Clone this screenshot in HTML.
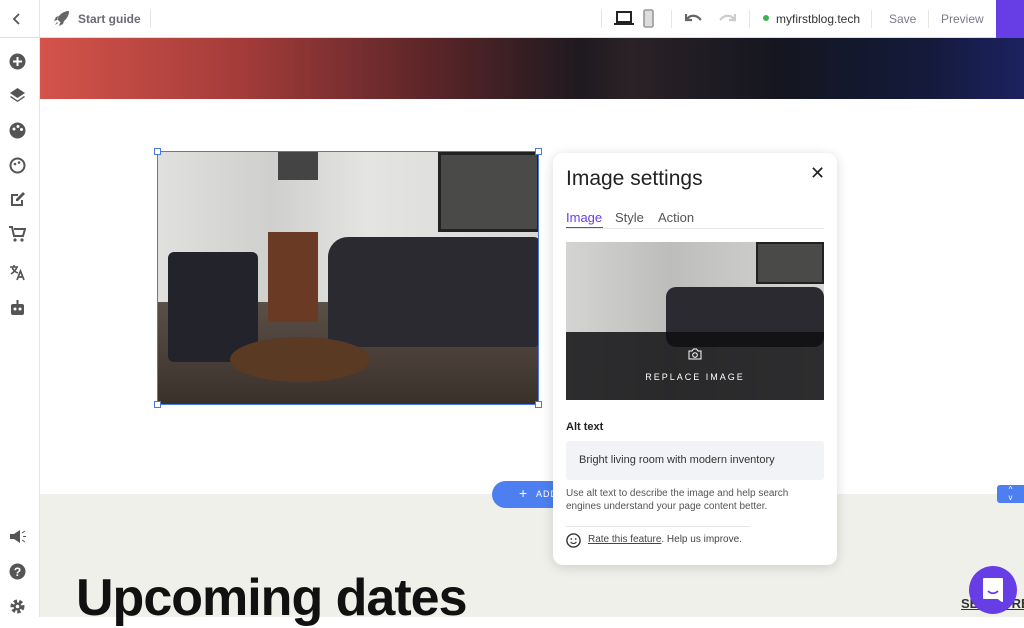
<!DOCTYPE html>
<html><head><meta charset="utf-8"><style>
*{box-sizing:border-box;margin:0;padding:0}
body{width:1024px;height:617px;overflow:hidden;font-family:"Liberation Sans",sans-serif;background:#fff;position:relative}
.top{position:absolute;left:0;top:0;width:1024px;height:38px;background:#fff;border-bottom:1px solid #ddd;z-index:5}
.side{position:absolute;left:0;top:38px;width:40px;height:579px;background:#fff;border-right:1px solid #e4e4e4;z-index:5}
.ic{position:absolute;left:9px;width:17px;height:17px;color:#4a4a55}
.t{position:absolute;font-size:12px;color:#7a7a88;top:12px;white-space:nowrap}
.sep{position:absolute;top:10px;width:1px;height:18px;background:#e6e6e6}
.hero{position:absolute;left:40px;top:38px;width:984px;height:61px;background:linear-gradient(90deg,#d4534a 0%,#a53c3a 20%,#5a2528 40%,#1e1a20 55%,#2a2226 60%,#151620 75%,#141a3a 90%,#1c2260 100%)}
.grey{position:absolute;left:40px;top:494px;width:984px;height:123px;background:#f0f0eb}
.photo{position:absolute;left:157px;top:151px;width:382px;height:254px;border:1px solid #4a7ae0;overflow:hidden;background:linear-gradient(90deg,#e0e0de 0%,#cfcfcd 30%,#e4e4e2 55%,#d8d8d6 100%)}
.h{position:absolute;width:7px;height:7px;background:#fff;border:1px solid #4a7ae0}
.panel{position:absolute;left:553px;top:153px;width:284px;height:412px;background:#fff;border-radius:10px;box-shadow:0 2px 12px rgba(0,0,0,.15);z-index:6}
</style></head><body>
<div class="top">
 <svg style="position:absolute;left:11px;top:12px" width="12" height="14" viewBox="0 0 12 14"><path d="M8 2L3 7l5 5" stroke="#555" stroke-width="1.8" fill="none"/></svg>
 <div style="position:absolute;left:39px;top:0;width:1px;height:38px;background:#e4e4e4"></div>
 <svg style="position:absolute;left:53px;top:10px" width="17" height="17" viewBox="0 0 17 17"><path d="M16 1C10 1 6 5 4 9l4 4c4-2 8-6 8-12zM4 10l-3 1 2-4 3-1zM7 13l-1 3 4-2 1-3zM2 15l2-3 1 1z" fill="#666"/></svg>
 <div class="t" style="left:78px;font-weight:bold;color:#6b6b78">Start guide</div>
 <div class="sep" style="left:150px"></div>
 <div class="sep" style="left:601px"></div>
 <svg style="position:absolute;left:614px;top:11px" width="20" height="15" viewBox="0 0 20 15"><rect x="3" y="1" width="14" height="10" stroke="#222" stroke-width="2" fill="none"/><rect x="0" y="12" width="20" height="2" fill="#222"/></svg>
 <svg style="position:absolute;left:643px;top:9px" width="11" height="19" viewBox="0 0 11 19"><rect x="1" y="1" width="9" height="17" rx="1.5" stroke="#999" stroke-width="1.6" fill="#ddd"/></svg>
 <div class="sep" style="left:671px"></div>
 <svg style="position:absolute;left:685px;top:12px" width="18" height="12" viewBox="0 0 18 12"><path d="M1 2v6h6M2 7c3-4 9-5 14 1" stroke="#666" stroke-width="2.2" fill="none"/></svg>
 <svg style="position:absolute;left:718px;top:12px" width="18" height="12" viewBox="0 0 18 12"><path d="M17 2v6h-6M16 7c-3-4-9-5-14 1" stroke="#ccc" stroke-width="2.2" fill="none"/></svg>
 <div class="sep" style="left:749px"></div>
 <div style="position:absolute;left:763px;top:15px;width:6px;height:6px;border-radius:50%;background:#3fb34f"></div>
 <div class="t" style="left:776px;color:#333">myfirstblog.tech</div>
 <div class="sep" style="left:871px"></div>
 <div class="t" style="left:889px">Save</div>
 <div class="sep" style="left:928px"></div>
 <div class="t" style="left:941px">Preview</div>
 <div style="position:absolute;left:996px;top:0;width:28px;height:38px;background:#673de6"></div>
</div>
<div class="side">
 <svg class="ic" style="top:15px" viewBox="0 0 17 17"><circle cx="8.5" cy="8.5" r="8" fill="#555"/><path d="M8.5 4v9M4 8.5h9" stroke="#fff" stroke-width="2"/></svg>
 <svg class="ic" style="top:49px" viewBox="0 0 17 17"><path d="M8.5 1L1 6l7.5 5L16 6zM2 9l6.5 4.5L15 9l1 1-7.5 5L1 10z" fill="#555"/></svg>
 <svg class="ic" style="top:84px" viewBox="0 0 17 17"><circle cx="8.5" cy="8.5" r="8" fill="#555"/><circle cx="5" cy="7" r="1.5" fill="#fff"/><circle cx="9" cy="4.5" r="1.5" fill="#fff"/><circle cx="12.5" cy="7.5" r="1.5" fill="#fff"/></svg>
 <svg class="ic" style="top:119px" viewBox="0 0 17 17"><circle cx="8.5" cy="8.5" r="7" stroke="#555" stroke-width="2" fill="none"/><circle cx="6" cy="7" r="1.3" fill="#555"/><circle cx="10" cy="5.5" r="1.3" fill="#555"/></svg>
 <svg class="ic" style="top:153px" viewBox="0 0 17 17"><path d="M2 3h7v2H4v8h8V9h2v6H2z" fill="#555"/><path d="M14 1l2 2-7 7H7V8z" fill="#555"/></svg>
 <svg class="ic" style="top:188px" viewBox="0 0 17 17"><path d="M0 1h3l2 9h9l2-7H5" stroke="#555" stroke-width="2" fill="none"/><circle cx="6" cy="14" r="1.6" fill="#555"/><circle cx="13" cy="14" r="1.6" fill="#555"/></svg>
 <svg class="ic" style="top:226px" viewBox="0 0 17 17"><path d="M1 3h8M5 1v2M3 3c1 3 3 5 6 6M8 3c-1 3-3 5-6 7" stroke="#555" stroke-width="1.6" fill="none"/><path d="M8 16l3.5-9 3.5 9M9.3 13h4.4" stroke="#555" stroke-width="1.7" fill="none"/></svg>
 <svg class="ic" style="top:261px" viewBox="0 0 17 17"><rect x="2" y="5" width="13" height="11" rx="2" fill="#555"/><rect x="7.5" y="1" width="2" height="4" fill="#555"/><circle cx="6" cy="10" r="1.5" fill="#fff"/><circle cx="11" cy="10" r="1.5" fill="#fff"/></svg>
 <svg class="ic" style="top:490px" viewBox="0 0 17 17"><path d="M1 6h4l6-4v13l-6-4H1z" fill="#555"/><path d="M13 5l3-2M13 12l3 2M14 8.5h3" stroke="#555"/></svg>
 <svg class="ic" style="top:525px" viewBox="0 0 17 17"><circle cx="8.5" cy="8.5" r="8" fill="#555"/><text x="8.5" y="13" font-size="12" font-weight="bold" fill="#fff" text-anchor="middle" font-family="Liberation Sans">?</text></svg>
 <svg class="ic" style="top:560px" viewBox="0 0 17 17"><circle cx="8.5" cy="8.5" r="5" stroke="#555" stroke-width="4" stroke-dasharray="3 2" fill="none"/><circle cx="8.5" cy="8.5" r="4" fill="#555"/><circle cx="8.5" cy="8.5" r="1.8" fill="#fff"/></svg>
</div>
<div class="hero"></div>
<div class="grey"></div>
<div class="photo">
 <div style="position:absolute;left:0;top:150px;width:382px;height:104px;background:linear-gradient(#5a5048,#3a302a)"></div>
 <div style="position:absolute;left:280px;top:0;width:102px;height:80px;background:#4a4a48;border:3px solid #222"></div>
 <div style="position:absolute;left:120px;top:0;width:40px;height:28px;background:#444"></div>
 <div style="position:absolute;left:170px;top:85px;width:212px;height:110px;background:#2a2a30;border-radius:20px 6px 6px 6px"></div>
 <div style="position:absolute;left:10px;top:100px;width:90px;height:110px;background:#23232b;border-radius:6px"></div>
 <div style="position:absolute;left:110px;top:80px;width:50px;height:90px;background:#6a3a24"></div>
 <div style="position:absolute;left:72px;top:185px;width:140px;height:45px;border-radius:50%;background:#5a3a22"></div>
</div>
<div class="h" style="left:154px;top:148px"></div><div class="h" style="left:535px;top:148px"></div>
<div class="h" style="left:154px;top:401px"></div><div class="h" style="left:535px;top:401px"></div>
<div style="position:absolute;left:492px;top:481px;width:80px;height:27px;border-radius:14px;background:#4e7ff0;color:#fff;font-size:9px;line-height:27px;padding-left:44px;letter-spacing:1px">ADD</div>
<div style="position:absolute;left:519px;top:486px;color:#fff;font-size:14px;line-height:14px">+</div>
<div style="position:absolute;left:997px;top:485px;width:27px;height:18px;background:#4e7ff0;border-radius:3px 0 0 3px;color:#fff;font-size:8px;text-align:center;line-height:8px;padding-top:1px">^<br>v</div>
<div class="panel">
 <div style="position:absolute;left:13px;top:14px;font-size:21px;color:#222">Image settings</div>
 <div style="position:absolute;left:257px;top:10px;font-size:18px;color:#222">✕</div>
 <div style="position:absolute;left:13px;top:57px;font-size:13px;color:#673de6">Image</div>
 <div style="position:absolute;left:13px;top:74px;width:37px;height:2px;background:#673de6"></div>
 <div style="position:absolute;left:62px;top:57px;font-size:13px;color:#555">Style</div>
 <div style="position:absolute;left:105px;top:57px;font-size:13px;color:#555">Action</div>
 <div style="position:absolute;left:13px;top:75px;width:258px;height:1px;background:#e6e6e6"></div>
 <div style="position:absolute;left:13px;top:89px;width:258px;height:158px;overflow:hidden;background:linear-gradient(90deg,#d4d4d2,#bdbdbb 40%,#d6d6d4)">
  <div style="position:absolute;left:100px;top:45px;width:158px;height:60px;background:#2a2a30;border-radius:10px"></div>
  <div style="position:absolute;left:190px;top:0;width:68px;height:42px;background:#4a4a48;border:2px solid #222"></div>
  <div style="position:absolute;left:0;top:90px;width:258px;height:68px;background:rgba(15,15,18,.85)"></div>
  <svg style="position:absolute;left:122px;top:106px" width="14" height="12" viewBox="0 0 14 12"><path d="M1 3h3l1.5-2h3L10 3h3v8H1z" stroke="#fff" fill="none"/><circle cx="7" cy="7" r="2.3" stroke="#fff" fill="none"/></svg>
  <div style="position:absolute;left:0;top:130px;width:258px;text-align:center;color:#fff;font-size:9px;letter-spacing:2px">REPLACE IMAGE</div>
 </div>
 <div style="position:absolute;left:13px;top:268px;font-size:11px;font-weight:bold;color:#222">Alt text</div>
 <div style="position:absolute;left:13px;top:288px;width:258px;height:39px;background:#f2f3f6;border-radius:3px;font-size:11px;color:#333;line-height:39px;padding-left:13px">Bright living room with modern inventory</div>
 <div style="position:absolute;left:13px;top:334px;width:250px;font-size:10px;line-height:13px;color:#555">Use alt text to describe the image and help search engines understand your page content better.</div>
 <div style="position:absolute;left:13px;top:373px;width:184px;height:1px;background:#e6e6e6"></div>
 <svg style="position:absolute;left:13px;top:380px" width="15" height="15" viewBox="0 0 15 15"><circle cx="7.5" cy="7.5" r="6.6" stroke="#333" stroke-width="1.4" fill="none"/><circle cx="5.3" cy="6" r=".9" fill="#333"/><circle cx="9.7" cy="6" r=".9" fill="#333"/><path d="M4.6 9c1.6 2 4.2 2 5.8 0" stroke="#333" stroke-width="1.1" fill="none"/></svg>
 <div style="position:absolute;left:35px;top:381px;font-size:10px;color:#444"><u>Rate this feature</u>. Help us improve.</div>
</div>
<div style="position:absolute;left:76px;top:568px;font-size:52px;font-weight:bold;color:#111;letter-spacing:-1px;white-space:nowrap">Upcoming dates</div>
<div style="position:absolute;left:961px;top:596px;font-size:13px;font-weight:bold;color:#333;text-decoration:underline;white-space:nowrap">SEE MORE</div>
<div style="position:absolute;left:969px;top:566px;width:48px;height:48px;border-radius:50%;background:#673de6;z-index:7"></div>
<svg style="position:absolute;left:981px;top:577px;z-index:8" width="24" height="26" viewBox="0 0 24 26"><path d="M3 2h18v22l-4-3H3z" fill="#fff" stroke="#fff" stroke-linejoin="round" stroke-width="2"/><path d="M7 14c3 3 7 3 10 0" stroke="#673de6" stroke-width="1.8" fill="none"/></svg>
</body></html>
